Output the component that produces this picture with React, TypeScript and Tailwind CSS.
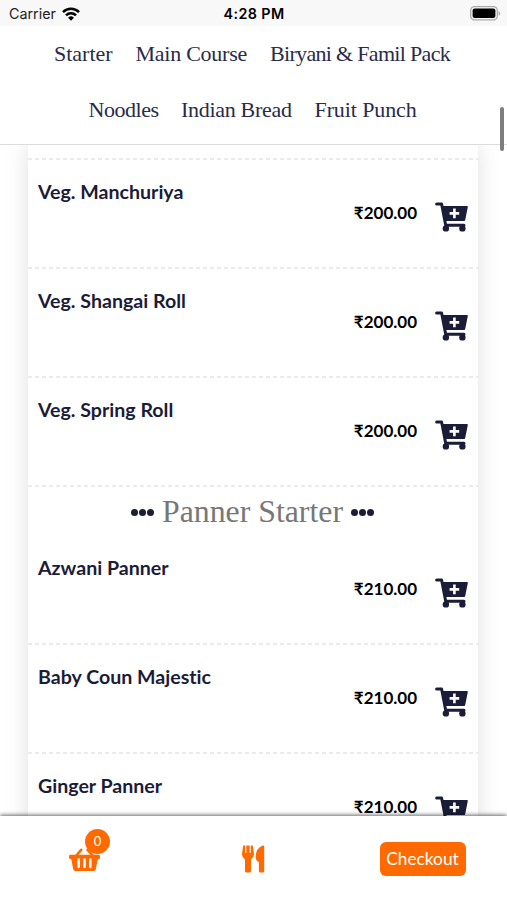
import React from 'react';

interface MenuItem {
  id: number;
  name: string;
  price: string;
}

interface Category {
  label: string;
  className: string;
}

const categoryRows: Category[][] = [
  [
    { label: 'Starter', className: 'w-[59px]' },
    { label: 'Main Course', className: 'w-[112px] tracking-[-0.25px]' },
    { label: 'Biryani & Famil Pack', className: 'w-[181px] tracking-[-0.68px]' }
  ],
  [
    { label: 'Noodles', className: 'w-[70px] tracking-[-0.45px]' },
    { label: 'Indian Bread', className: 'w-[111px] tracking-[-0.3px]' },
    { label: 'Fruit Punch', className: 'w-[102px] tracking-[-0.1px]' }
  ]
];

const vegItems: MenuItem[] = [
  { id: 1, name: 'Veg. Manchuriya', price: '₹200.00' },
  { id: 2, name: 'Veg. Shangai Roll', price: '₹200.00' },
  { id: 3, name: 'Veg. Spring Roll', price: '₹200.00' }
];

const pannerItems: MenuItem[] = [
  { id: 4, name: 'Azwani Panner', price: '₹210.00' },
  { id: 5, name: 'Baby Coun Majestic', price: '₹210.00' },
  { id: 6, name: 'Ginger Panner', price: '₹210.00' }
];

function CartPlusIcon() {
  return (
    <svg className="h-[30px] w-[33px]" viewBox="0 0 33 30" fill="currentColor">
      <path d="M1.6 2H6.6L10.7 23.2H29" fill="none" stroke="currentColor" strokeWidth="3" strokeLinecap="round" strokeLinejoin="round" />
      <path d="M6.5 4H32q1 0 .8 1l-2.5 12.5q-.2 1.5-1.2 1.5H9.5z" />
      <circle cx="10.9" cy="26.4" r="3.2" />
      <circle cx="27.4" cy="26.4" r="3.2" />
      <path d="M19.4 6.6v9.6M14.6 11.4H24.2" stroke="#fff" strokeWidth="2.6" />
    </svg>
  );
}

function BasketIcon() {
  return (
    <svg className="h-[23px] w-[31px]" viewBox="0 0 31 23" fill="currentColor">
      <path d="M12.2 1.8 7 8M18.6 1.8 24 8" stroke="currentColor" strokeWidth="2.6" strokeLinecap="round" />
      <rect y="6.8" width="31" height="4.2" rx="1.4" />
      <path d="M2 10h27l-2.2 11q-.4 1.9-2.2 1.9H6.4q-1.8 0-2.2-1.9z" />
      <path d="M9.7 11.5v7.5M15.5 11.5v7.5M21.3 11.5v7.5" stroke="#fff" strokeWidth="2.5" strokeLinecap="round" />
    </svg>
  );
}

function CutleryIcon() {
  return (
    <svg className="h-[28px] w-[23px]" viewBox="0 0 23 28" fill="currentColor">
      <path d="M1.2 0.6h9.6l1.2 8.2q.2 3.6-3 5.6V26q0 1.5-1.5 1.5h-3Q3 27.5 3 26V14.4Q-.2 12.4 0 8.8z" />
      <path d="M3.8 0v8M8.2 0v8" stroke="#fff" strokeWidth="1.1" />
      <path d="M20.7.4q1.5-.2 1.5 1.2V26q0 1.5-1.5 1.5h-2.3q-1.5 0-1.5-1.5v-8.8q-3.2-1.4-3.2-5.2 0-9 7-11.6z" />
    </svg>
  );
}

function StatusBar() {
  return (
    <div className="grid h-[26px] shrink-0 grid-cols-3 items-center bg-[#f8f8f8] pl-[9px] pr-[6px] pt-[1px] font-['Inter',sans-serif] text-[14.3px] text-[#222]">
      <div className="flex items-center gap-[6px]">
        <span>Carrier</span>
        <svg className="h-[14px] w-[18px]" viewBox="0 0 18 14" fill="none" stroke="#000" strokeWidth="2.5">
          <path d="M1 5.1a11.3 11.3 0 0 1 16 0" />
          <path d="M4 8.3a7 7 0 0 1 10 0" />
          <path d="M9 13.7 6.1 10.8a4.1 4.1 0 0 1 5.8 0z" fill="#000" stroke="none" />
        </svg>
      </div>
      <span className="-ml-[2px] whitespace-nowrap text-center font-semibold tracking-[0.4px] text-black">4:28 PM</span>
      <svg className="h-[15px] w-[31px] justify-self-end" viewBox="0 0 31 15">
        <rect x="0.7" y="0.7" width="26.6" height="13.2" rx="3.8" fill="#f8f8f8" stroke="#aaa" strokeWidth="1.3" />
        <rect x="2.6" y="2.6" width="22.8" height="9.4" rx="2" fill="#000" />
        <path d="M28.6 5v4.8c2-.8 2-4 0-4.8z" fill="#aaa" />
      </svg>
    </div>
  );
}

function Divider() {
  return (
    <div className="h-[2px] shrink-0 bg-[repeating-linear-gradient(90deg,#ebebeb_0_4px,#ffffff_4px_7px)]" />
  );
}

function MenuRow({ item }: { item: MenuItem }) {
  return (
    <div className="flex h-[108.9px] shrink-0 flex-col">
      <div className="flex flex-1 justify-between px-[10px]">
        <h3 className="pt-[17px] text-[19.6px] font-bold leading-[30px] text-[#1b1c37] [font-variant-ligatures:none]">
          {item.name}
        </h3>
        <div className="flex items-center gap-[18px]">
          <span className="pb-[1px] text-[17px] font-bold leading-4 text-black">{item.price}</span>
          <button className="pt-[7px] text-[#1b1c37]" aria-label="Add to cart">
            <CartPlusIcon />
          </button>
        </div>
      </div>
      <Divider />
    </div>
  );
}

function Dots() {
  return (
    <span className="flex gap-[1px]">
      <span className="size-[7px] rounded-full bg-[#1b1c37]" />
      <span className="size-[7px] rounded-full bg-[#1b1c37]" />
      <span className="size-[7px] rounded-full bg-[#1b1c37]" />
    </span>
  );
}

export default function App() {
  return (
    <div className="relative flex h-[900px] w-[507px] flex-col overflow-hidden bg-white font-['Lato',sans-serif]">
      <StatusBar />

      {/* Categories */}
      <nav className="h-[119px] shrink-0 border-b border-[#dcdcdc] font-['Liberation_Serif',serif] text-[22px] text-[#292b49]">
        {categoryRows.map((row, index) => (
          <div key={index} className="flex h-14 justify-center gap-[22.5px] pr-[2px] leading-[56px]">
            {row.map((category) => (
              <a key={category.label} className={`whitespace-nowrap ${category.className}`}>
                {category.label}
              </a>
            ))}
          </div>
        ))}
      </nav>

      {/* Menu */}
      <main className="min-h-0 flex-1 overflow-hidden px-7">
        <div className="flex w-[450px] flex-col bg-white pt-[13px] shadow-[0_0_22px_rgba(0,0,0,0.13)]">
          <Divider />
          {vegItems.map((item) => (
            <MenuRow key={item.id} item={item} />
          ))}
          <div className="flex h-[49.5px] shrink-0 items-center justify-center gap-[8px] pr-[1px] pt-[2px] font-['Liberation_Serif',serif] text-[31.8px] text-[#777]">
            <Dots />
            <h2 className="leading-[40px]">Panner Starter</h2>
            <Dots />
          </div>
          {pannerItems.map((item) => (
            <MenuRow key={item.id} item={item} />
          ))}
        </div>
      </main>

      {/* Bottom bar */}
      <footer className="relative z-10 flex h-[84px] shrink-0 items-center bg-white text-[#ff6a00] shadow-[0_-1px_4px_rgba(0,0,0,0.6)]">
        <div className="flex flex-1 justify-center">
          <button className="relative pt-[3px]" aria-label="Cart">
            <BasketIcon />
            <span className="absolute left-[16px] top-[-16px] flex size-[25px] items-center justify-center rounded-full bg-[#ff6a00] text-[13px] text-white">
              0
            </span>
          </button>
        </div>
        <div className="flex flex-1 justify-center pt-[2px]">
          <CutleryIcon />
        </div>
        <div className="flex flex-1 justify-center pt-[1px]">
          <button className="h-[34px] w-[86px] rounded-[6px] bg-[#ff6a00] text-[17.3px] text-white">Checkout</button>
        </div>
      </footer>

      <div className="absolute right-[3px] top-[107px] z-20 h-[44px] w-[4px] rounded-full bg-[#7d7d7d]" />
    </div>
  );
}
